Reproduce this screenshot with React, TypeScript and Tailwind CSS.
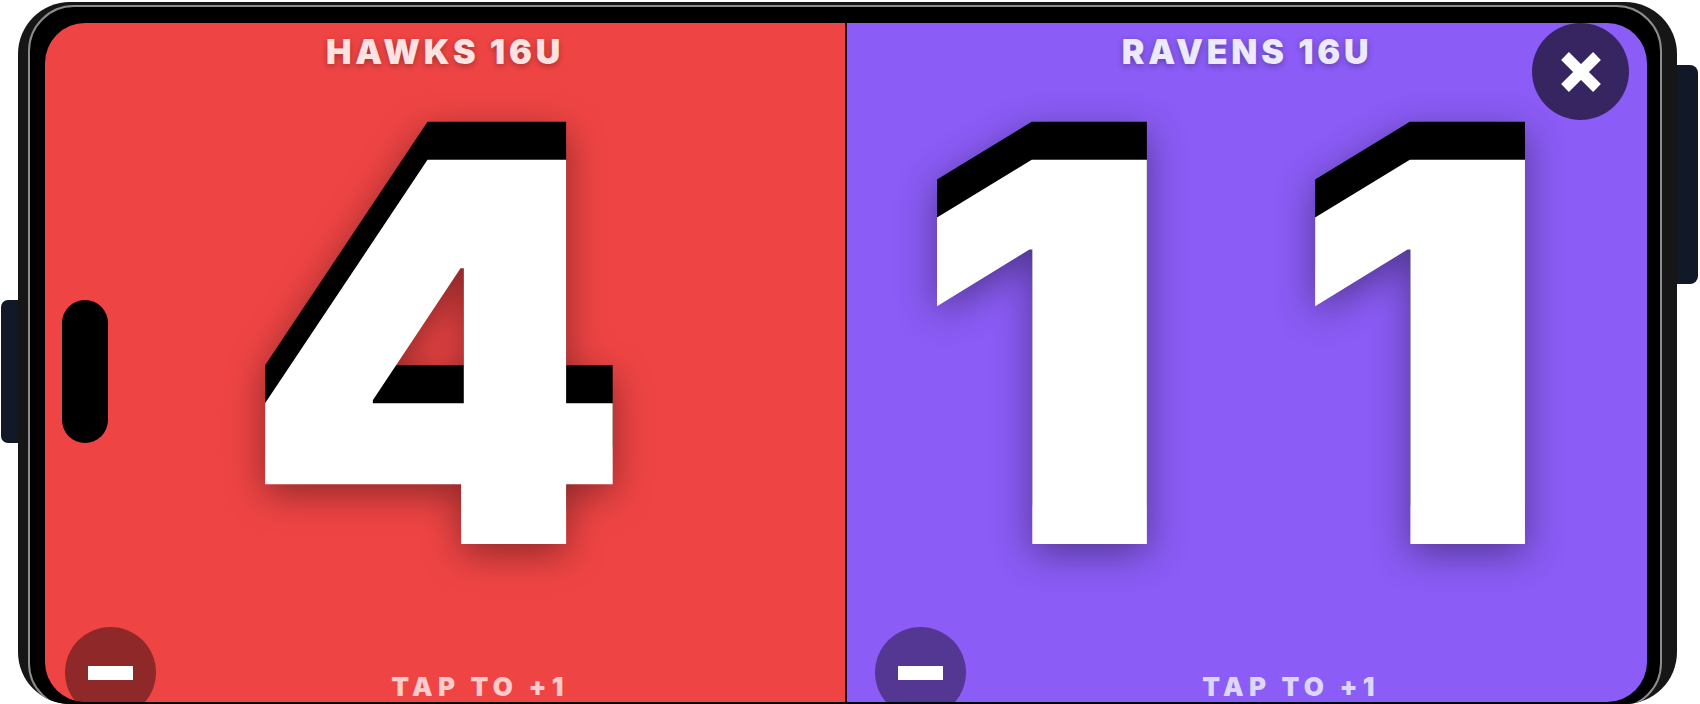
import React from "react";

function MinusButton({ offset }: { offset: string }) {
  return (
    <div
      className={`absolute top-[604px] ${offset} w-[91px] h-[91px] rounded-full bg-black/40 flex items-center justify-center`}
    >
      <div className="w-[45px] h-[14px] bg-white" />
    </div>
  );
}

function Panel({
  name,
  score,
  bg,
  nameColor,
  tapColor,
  tapPad,
  scoreClass,
  children,
}: {
  name: string;
  score: React.ReactNode;
  bg: string;
  nameColor: string;
  tapColor: string;
  tapPad: string;
  scoreClass: string;
  children?: React.ReactNode;
}) {
  return (
    <div className={`relative h-full flex flex-col items-center ${bg}`}>
      <div
        className={`pt-[12px] text-[34px] leading-none font-black tracking-[0.11em] ${nameColor} [text-shadow:0_2px_6px_rgba(0,0,0,0.3)]`}
      >
        {name}
      </div>
      <div
        className={`mt-[83px] ${scoreClass} text-[528px] leading-[400px] font-black text-white whitespace-nowrap [text-shadow:0_-38px_0_#000] [filter:drop-shadow(0_10px_18px_rgba(0,0,0,0.4))]`}
      >
        {score}
      </div>
      <div
        className={`mt-auto pb-[2px] ${tapPad} text-[26px] leading-none font-black tracking-[0.2em] ${tapColor}`}
      >
        TAP TO +1
      </div>
      {children}
    </div>
  );
}

export default function App() {
  return (
    <div className="w-[1700px] h-[704px] bg-white overflow-hidden font-['Inter','Noto_Sans',sans-serif]">
      <div className="flex items-start pl-[1px] pt-[2px]">
        <div className="mt-[298px] w-[17px] h-[143px] rounded-l-[7px] bg-[#111827]" />
        <div className="w-[1659px] h-[702px] rounded-[52px] bg-[#161616] pl-[10px] pt-[3px] pr-[15px] overflow-hidden">
          <div className="h-[704px] rounded-[46px] border-2 border-[#8c8c8c] bg-black pl-[15px] pt-[16px] pr-[13px]">
            <div className="h-[679px] rounded-[40px] overflow-hidden flex">
              <div className="w-[800px] shrink-0">
                <Panel
                  name="HAWKS 16U"
                  score="4"
                  bg="bg-[#ef4444]"
                  nameColor="text-[#fee2e2]"
                  tapColor="text-[#fecaca]"
                  tapPad="pl-[70px]"
                  scoreClass="pr-[11px] tabular-nums scale-x-[1.05]"
                >
                  <div className="absolute left-[17px] top-[277px] w-[46px] h-[143px] rounded-full bg-black" />
                  <MinusButton offset="left-[20px]" />
                </Panel>
              </div>
              <div className="flex-1 border-l-2 border-[#1a0f1f]">
                <Panel
                  name="RAVENS 16U"
                  score={
                    <>
                      <span className="tracking-[105px]">1</span>1
                    </>
                  }
                  bg="bg-[#8b5cf6]"
                  nameColor="text-[#ede9fe]"
                  tapColor="text-[#ddd6fe]"
                  tapPad="pl-[88px]"
                  scoreClass="pr-[28px] scale-x-[1.1]"
                >
                  <MinusButton offset="left-[28px]" />
                  <div className="absolute top-0 right-[18px] w-[97px] h-[97px] rounded-full bg-black/60 flex items-center justify-center">
                    <svg width="44" height="44" viewBox="0 0 44 44">
                      <path d="M6 6 L38 38 M38 6 L6 38" stroke="#ffffff" strokeWidth="11" strokeLinecap="butt" fill="none" />
                    </svg>
                  </div>
                </Panel>
              </div>
            </div>
          </div>
        </div>
        <div className="mt-[63px] w-[21px] h-[219px] rounded-r-[8px] bg-[#111827]" />
      </div>
    </div>
  );
}
